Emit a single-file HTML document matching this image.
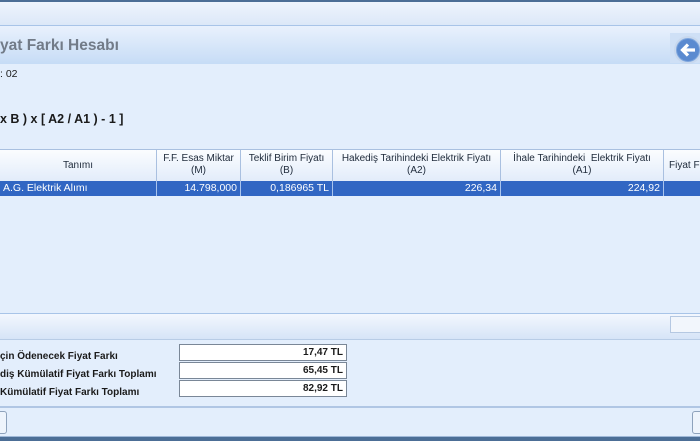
<!DOCTYPE html>
<html><head><meta charset="utf-8"><style>
*{margin:0;padding:0;box-sizing:border-box}
body{width:700px;height:441px;overflow:hidden;background:#e3eefc;font-family:"Liberation Sans",sans-serif;font-size:10px;color:#1a1a1a;position:relative}
.a{position:absolute}
.th{position:absolute;top:150px;height:31px;border-right:1px solid #a9c0e0;text-align:center;font-size:10px;line-height:12px;padding-top:3px;background:linear-gradient(#fbfdff,#e2ecfa);color:#1e2a3a;white-space:nowrap}
.td{position:absolute;top:181px;height:15px;border-right:1px solid #a9c4ee;color:#fff;font-size:10.5px;line-height:15px;text-align:right;padding-right:3px}
.box{position:absolute;left:179px;width:168px;height:17px;background:#fff;border:1px solid #7a8797;text-align:right;font-weight:bold;font-size:10px;line-height:15px;padding-right:3px}
.lb{position:absolute;left:0;font-weight:bold;font-size:10px}
</style></head><body>
<div class="a" style="left:0;top:0;width:700px;height:2px;background:#4c6e96"></div>
<div class="a" style="left:0;top:2px;width:700px;height:23px;background:linear-gradient(#eef4fd,#dce8f8)"></div>
<div class="a" style="left:0;top:25px;width:700px;height:1px;background:#a8c4e8"></div>
<div class="a" style="left:0;top:26px;width:700px;height:38px;background:linear-gradient(#e9f1fd,#c6dcf6)"></div>
<div class="a" style="left:0;top:37px;font-size:15.5px;font-weight:bold;color:#727b88">yat Farkı Hesabı</div>
<div class="a" style="left:670px;top:33px;width:30px;height:30px;background:#cfe0f6"></div>
<svg class="a" style="left:672px;top:35px" width="30" height="30"><circle cx="16" cy="15" r="13" fill="#7ea6dd" stroke="#c8d8ee" stroke-width="2"/><circle cx="16" cy="15" r="11" fill="#5a8ad0"/><path d="M23 15H11M16 9.5l-5.5 5.5 5.5 5.5" stroke="#fff" stroke-width="3.2" fill="none"/></svg>
<div class="a" style="left:0;top:68px;font-size:10.5px">: 02</div>
<div class="a" style="left:0;top:112px;font-size:12.5px;font-weight:bold">x B ) x [ A2 / A1 ) - 1 ]</div>
<div class="a" style="left:0;top:149px;width:700px;height:1px;background:#a9c0e0"></div>
<div class="th" style="left:0;width:157px;padding-top:10px">Tanımı</div>
<div class="th" style="left:157px;width:84px">F.F. Esas Miktar<br>(M)</div>
<div class="th" style="left:241px;width:92px">Teklif Birim Fiyatı<br>(B)</div>
<div class="th" style="left:333px;width:168px">Hakediş Tarihindeki Elektrik Fiyatı<br>(A2)</div>
<div class="th" style="left:501px;width:163px">İhale Tarihindeki &nbsp;Elektrik Fiyatı<br>(A1)</div>
<div class="th" style="left:664px;width:40px;padding-top:10px;text-align:left;padding-left:5px">Fiyat F</div>
<div class="a" style="left:0;top:181px;width:700px;height:15px;background:#3166c3"></div>
<div class="td" style="left:0;width:157px;text-align:left;padding-left:3px">A.G. Elektrik Alımı</div>
<div class="td" style="left:157px;width:84px">14.798,000</div>
<div class="td" style="left:241px;width:92px">0,186965 TL</div>
<div class="td" style="left:333px;width:168px">226,34</div>
<div class="td" style="left:501px;width:163px">224,92</div>
<div class="a" style="left:0;top:313px;width:700px;height:1px;background:#a8c4e8"></div>
<div class="a" style="left:0;top:314px;width:700px;height:25px;background:linear-gradient(#f3f7fe,#d6e4f7)"></div>
<div class="a" style="left:670px;top:316px;width:32px;height:17px;background:#f2f6fc;border:1px solid #b5c8e2"></div>
<div class="a" style="left:0;top:339px;width:700px;height:1px;background:#b8cce6"></div>
<div class="lb" style="top:351px">çin Ödenecek Fiyat Farkı</div>
<div class="lb" style="top:369px">diş Kümülatif Fiyat Farkı Toplamı</div>
<div class="lb" style="top:387px">Kümülatif Fiyat Farkı Toplamı</div>
<div class="box" style="top:344px">17,47 TL</div>
<div class="box" style="top:362px">65,45 TL</div>
<div class="box" style="top:380px">82,92 TL</div>
<div class="a" style="left:0;top:406px;width:700px;height:2px;background:#b0c6e4"></div>
<div class="a" style="left:-4px;top:411px;width:11px;height:23px;border:1px solid #8ea2bc;border-radius:3px;background:#eef4fc"></div>
<div class="a" style="left:692px;top:411px;width:14px;height:23px;border:1px solid #8ea2bc;border-radius:3px;background:#eef4fc"></div>
<div class="a" style="left:0;top:436px;width:700px;height:1px;background:#9fb8d8"></div>
<div class="a" style="left:0;top:437px;width:700px;height:4px;background:#4c6e96"></div>
</body></html>
